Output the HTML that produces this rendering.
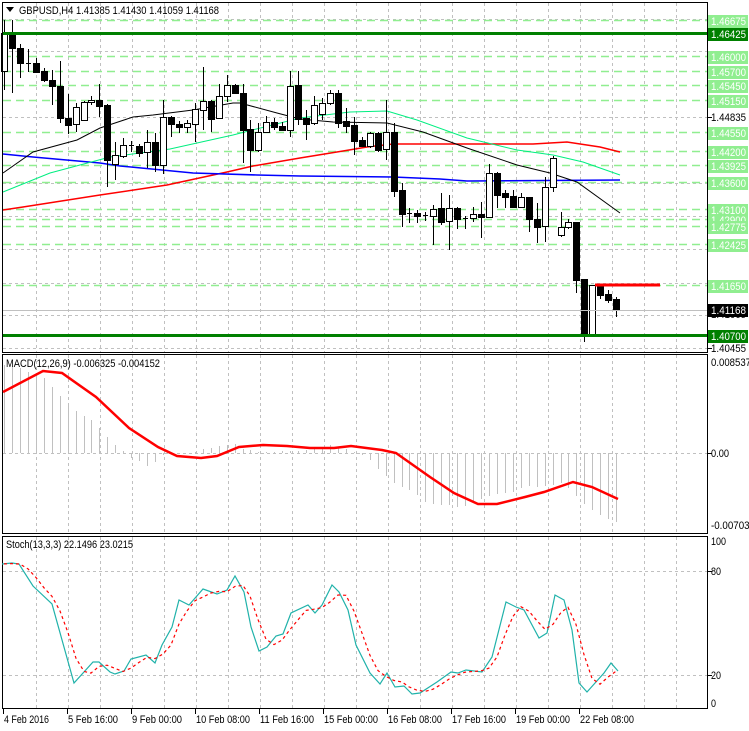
<!DOCTYPE html>
<html><head><meta charset="utf-8">
<style>
html,body{margin:0;padding:0;background:#fff;}
svg{display:block;font-family:"Liberation Sans",sans-serif;}
</style></head>
<body>
<svg id="s" width="749" height="731" xmlns="http://www.w3.org/2000/svg"></svg>
<script>
var S=document.getElementById('s');var h='';
function L(x1,y1,x2,y2,c,w,d){h+='<line x1="'+x1+'" y1="'+y1+'" x2="'+x2+'" y2="'+y2+'" stroke="'+c+'" stroke-width="'+(w||1)+'"'+(d?' stroke-dasharray="'+d+'"':'')+'/>';}
function R(x,y,w,hh,f,st){h+='<rect x="'+x+'" y="'+y+'" width="'+w+'" height="'+hh+'" fill="'+f+'"'+(st?' stroke="'+st+'" stroke-width="1"':'')+'/>';}
function T(x,y,t,c,s,len){h+='<text x="'+x+'" y="'+y+'" fill="'+(c||'#000')+'" font-size="'+(s||11)+'"'+(len?' textLength="'+len+'" lengthAdjust="spacingAndGlyphs"':'')+'>'+t+'</text>';}
function P(pts,c,w,d){h+='<polyline fill="none" points="'+pts.map(function(p){return p[0]+','+p[1]}).join(' ')+'" stroke="'+c+'" stroke-width="'+(w||1)+'"'+(d?' stroke-dasharray="'+d+'"':'')+'/>';}
function Y(p){return Math.round(20+(1.46675-p)*5273)+0.5;}
for(var j=1;j<=21;j++){var x=4+32*j+0.5;L(x,3,x,352,'#c0c0c0',1,'3,3');L(x,355,x,533,'#c0c0c0',1,'3,3');L(x,537,x,708,'#c0c0c0',1,'3,3');}
[19,51,117,183,216,249,283,315,348].forEach(function(y){L(3,y+0.5,707,y+0.5,'#c0c0c0',1,'3,3');});
var lv=[1.46675,1.46000,1.45700,1.45450,1.45150,1.44550,1.44200,1.43925,1.43600,1.43100,1.42900,1.42775,1.42425,1.41650];
lv.forEach(function(p){L(3,Y(p),707,Y(p),'#90ee90',1.5,'8,5');});
P([[3,210],[23,207],[100,195],[167,185],[227,172],[253,166],[300,158],[343,151],[367,147],[393,144],[467,144],[533,144],[567,142],[600,147],[620,152]],'#ff0000',1.5);
P([[3,154],[33,157],[100,163],[120,166],[193,173],[257,175],[300,176],[393,177],[440,179],[467,181],[620,180]],'#0000ff',1.5);
P([[3,192],[50,173],[110,157],[170,149],[233,135],[300,118],[350,112],[387,111],[417,120],[467,138],[517,150],[553,155],[583,162],[620,175]],'#00ee80',1);
P([[3,173],[33,152],[77,140],[100,128],[133,117],[153,115],[193,110],[233,103],[240,103],[277,113],[300,119],[333,122],[387,123],[423,132],[467,148],[517,165],[550,173],[577,182],[620,213]],'#000',1);
var C=[[33,71,20,90,1],[33,48,20,93,0],[48,63,44,78,0],[63,63,49,72,2],[63,72,58,73,0],[71,80,68,82,0],[80,86,70,105,0],[86,118,61,123,0],[118,125,94,134,0],[107,124,103,132,1],[102,120,101,120,1],[100,102,96,105,1],[100,106,84,117,0],[105,160,104,187,0],[155,164,142,180,1],[145,156,138,158,1],[145,145,141,152,2],[146,153,144,157,0],[142,152,130,168,1],[142,165,133,172,0],[117,165,100,174,1],[117,124,116,137,0],[124,127,121,133,0],[123,127,120,133,1],[109,124,103,142,1],[101,110,67,130,1],[101,119,100,132,0],[96,118,84,119,1],[85,96,75,102,1],[85,93,84,94,0],[93,130,84,163,0],[129,150,120,172,0],[132,150,123,152,1],[122,132,116,132,1],[122,127,118,130,0],[126,130,122,130,0],[86,130,71,137,1],[85,119,71,125,0],[118,124,110,140,0],[105,123,96,125,1],[103,114,98,120,1],[93,103,90,105,1],[93,123,90,128,0],[121,126,108,133,0],[125,141,117,155,0],[140,146,137,147,0],[133,146,132,148,1],[133,150,132,152,0],[132,149,100,160,1],[132,191,123,197,0],[190,214,183,227,0],[213,213,208,223,2],[213,216,210,223,0],[215,215,212,221,2],[209,216,205,245,1],[208,222,193,225,0],[208,221,195,250,1],[208,219,207,229,0],[218,218,216,229,2],[214,218,207,222,1],[214,217,202,238,0],[173,217,164,217,1],[173,195,172,208,0],[193,197,190,208,0],[196,207,190,208,0],[197,207,193,208,1],[197,219,203,232,0],[219,227,203,243,0],[187,226,177,242,1],[158,187,156,192,1],[227,235,212,237,1],[222,227,219,229,1],[222,280,222,293,0],[279,336,279,342,0],[285,336,285,336,1],[286,295,286,299,0],[294,300,290,303,0],[299,310,297,317,0]];
C.forEach(function(c,k){var x=4+Math.round(7.95*k);L(x+0.5,c[2],x+0.5,c[3],'#000',1);
 if(c[4]==2){L(x-2,c[0]+0.5,x+3,c[0]+0.5,'#000',1);}
 else R(x-2.5,c[0]+0.5,6,Math.max(c[1]-c[0],1),c[4]?'#fff':'#000','#000');});
L(595,285,660,285,'#ff0000',3);
L(3,310.5,707,310.5,'#c0c0c0',1);
L(3,Y(1.46425),707,Y(1.46425),'#008000',3);
L(3,Y(1.40700),707,Y(1.40700),'#008000',3);
R(2.5,2.5,705,350,'none','#000');
R(2.5,354.5,705,179,'none','#000');
R(2.5,536.5,705,172,'none','#000');
h+='<path d="M6 7 L14 7 L10 12 Z" fill="#000"/>';
T(19,14,'GBPUSD,H4  1.41385 1.41430 1.41059 1.41168','#000',11,200);
T(711,121,'1.44835','#000',11,35);T(711,252,'1.42350','#000',11,35);T(711,318,'1.41065','#000',11,35);T(711,352,'1.40455','#000',11,35);
[117,249,315,348].forEach(function(y){L(708,y+0.5,712,y+0.5,'#000',1);});
lv.forEach(function(p){var y=Math.round(Y(p));R(708,y-6,40,13,'#90ee90');T(711,y+4,p.toFixed(5),'#fff',11,35);});
[1.46425,1.40700].forEach(function(a){var y=Math.round(Y(a));R(708,y-6,40,13,'#008000');T(711,y+4,a.toFixed(5),'#fff',11,35);});
R(708,304,40,13,'#000');T(711,314,'1.41168','#fff',11,35);
L(3,453.5,707,453.5,'#c0c0c0',1,'3,3');
var hp=[[4,365],[19,367],[28,372],[44,377],[60,395],[75,410],[84,416],[92,420],[107,436],[116,445],[123,451],[132,458],[140,461],[148,466],[156,462],[164,455],[180,453],[196,452],[204,449],[220,446],[236,444],[244,449],[260,452],[300,451],[332,445],[356,452],[364,456],[372,461],[380,471],[396,484],[412,491],[420,497],[428,504],[436,504],[444,506],[452,505],[460,508],[492,495],[516,492],[526,485],[540,487],[564,483],[588,507],[596,512],[604,517],[612,521],[620,523]];
function interp(a,x){for(var i=0;i<a.length-1;i++){if(x>=a[i][0]&&x<=a[i+1][0]){var t=(x-a[i][0])/(a[i+1][0]-a[i][0]);return a[i][1]+t*(a[i+1][1]-a[i][1]);}}return x<a[0][0]?a[0][1]:a[a.length-1][1];}
for(var k=0;k<78;k++){var x=4+Math.round(7.95*k)+0.5;var v=interp(hp,x);L(x,453,x,Math.round(v),'#c0c0c0',1);}
P([[3,392],[43,371],[62,373],[96,397],[129,428],[158,447],[177,456],[201,458],[217,456],[239,447],[263,445],[287,446],[310,448],[334,448],[351,446],[382,450],[396,453],[430,477],[454,493],[478,504],[497,504],[525,497],[544,492],[573,482],[592,487],[618,499]],'#ff0000',2.5);
T(6,367,'MACD(12,26,9) -0.006325 -0.004152','#000',11,154);
T(711,366,'0.008537','#000',11,40);T(711,457,'0.00','#000',11,18);T(711,529,'-0.007033','#000',11,44);
L(708,453.5,712,453.5,'#000',1);
L(3,571.5,707,571.5,'#c0c0c0',1,'3,3');L(3,675.5,707,675.5,'#c0c0c0',1,'3,3');
var sm=[[2,564],[12,563],[19,564],[33,586],[52,604],[74,683],[93,662],[99,662],[110,672],[115,674],[124,671],[131,659],[146,655],[155,663],[162,645],[172,627],[179,600],[189,605],[203,589],[217,594],[227,590],[235,576],[244,592],[251,627],[259,651],[267,647],[276,636],[283,634],[291,613],[308,605],[315,613],[322,605],[332,585],[339,592],[348,610],[356,645],[370,673],[380,684],[387,673],[395,687],[404,686],[412,694],[420,693],[437,682],[451,672],[458,673],[466,670],[482,672],[492,657],[506,602],[516,607],[524,610],[539,638],[547,633],[555,595],[564,600],[572,630],[579,683],[587,692],[604,673],[611,663],[618,671]];
P(sm,'#20b2aa',1.2);
var sg=[];for(var k=0;k<78;k++){var x=4+Math.round(7.95*k);var a=interp(sm,x),b=interp(sm,x-8),c=interp(sm,x-16);sg.push([x,((a+b+c)/3).toFixed(1)]);}
P(sg,'#ff0000',1.2,'3,3');
T(6,548,'Stoch(13,3,3) 22.1496 23.0215','#000',11,127);
T(711,545,'100','#000',11,15);T(711,575,'80','#000',11,10);T(711,679,'20','#000',11,10);T(711,707,'0','#000',11,5);
[571,675].forEach(function(y){L(708,y+0.5,712,y+0.5,'#000',1);});
var tl=[[3,'4 Feb 2016'],[67,'5 Feb 16:00'],[131,'9 Feb 00:00'],[195,'10 Feb 08:00'],[259,'11 Feb 16:00'],[323,'15 Feb 00:00'],[387,'16 Feb 08:00'],[451,'17 Feb 16:00'],[515,'19 Feb 00:00'],[579,'22 Feb 08:00']];
tl.forEach(function(t){L(t[0]+0.5,709,t[0]+0.5,714,'#000',1);T(t[0]+1,723,t[1],'#000',11,Math.round(t[1].length*4.5));});
S.innerHTML=h;
</script>
</body></html>
